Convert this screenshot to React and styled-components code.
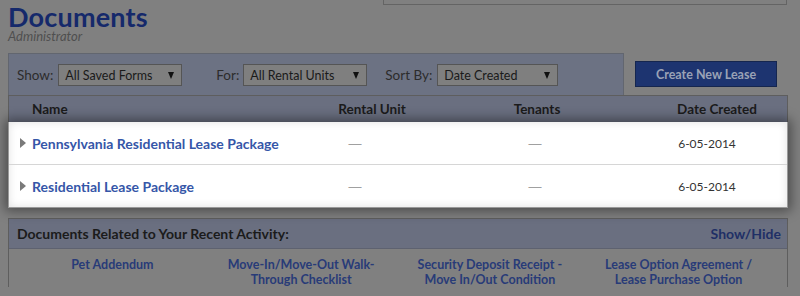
import React from 'react';
import styled, { createGlobalStyle } from 'styled-components';

const Global = createGlobalStyle`
  html, body { margin: 0; padding: 0; background: #808080; }
  body {
    width: 800px; height: 296px; overflow: hidden;
    font-family: Lato, "Open Sans", "Liberation Sans", sans-serif;
  }
  * { box-sizing: border-box; }
`;

const Page = styled.div`
  padding: 0 12px 0 8px;
`;

const TopRow = styled.header`
  height: 53px;
  display: flex;
  justify-content: space-between;
  align-items: flex-start;
`;

const TitleBlock = styled.div`
  padding-top: 2.5px;
`;

const Title = styled.h1`
  margin: 0;
  font-size: 27px;
  line-height: 28px;
  font-weight: 700;
  color: #15296b;
  letter-spacing: 0.2px;
`;

const Subtitle = styled.div`
  margin-top: -1px;
  font-size: 13px;
  line-height: 13px;
  font-style: italic;
  color: #4f4f4f;
`;

const TopBox = styled.div`
  width: 404px;
  height: 5px;
  margin-right: 1px;
  border: 1px solid #646464;
  border-top: none;
`;

const FilterRow = styled.div`
  display: flex;
  align-items: flex-start;
`;

const FilterBar = styled.div`
  width: 616px;
  height: 42px;
  display: flex;
  align-items: center;
  padding: 1px 0 0 8px;
  background: #6c7283;
  border: 1px solid #62666f;
  border-bottom: none;
`;

const FilterGroup = styled.div`
  display: flex;
  align-items: center;
  margin-left: ${p => p.$offset || 0}px;
`;

const Label = styled.span`
  font-size: 13.5px;
  color: #2c2c2c;
  margin-right: ${p => p.$gap}px;
`;

const Select = styled.div`
  width: ${p => p.$w}px;
  height: 22px;
  display: flex;
  align-items: center;
  justify-content: space-between;
  padding: 0 7px 0 6px;
  background: #7f7f7f;
  border: 1px solid #555;
  font-size: 12.5px;
  color: #1a1a1a;
`;

const Arrow = styled.span`
  width: 0;
  height: 0;
  border-left: 3.5px solid transparent;
  border-right: 3.5px solid transparent;
  border-top: 7px solid #111;
`;

const CreateButton = styled.button`
  margin: 8px 0 0 11px;
  width: 142px;
  height: 26px;
  background: #1d3470;
  border: 1px solid #15264f;
  color: #9aa2b6;
  font-family: inherit;
  font-size: 12.5px;
  font-weight: 700;
  padding: 0;
`;

const Table = styled.div`
  border: 1px solid #5e5e5e;
  border-bottom: none;
`;

const HeaderRow = styled.div`
  display: grid;
  grid-template-columns: 292px 142px 188px 1fr;
  height: 26px;
  align-items: center;
  background: #6a6f80;
  font-size: 13.5px;
  font-weight: 700;
  color: #1b1b1b;
`;

const HeadCell = styled.div`
  text-align: ${p => p.$align || 'center'};
  padding-left: ${p => p.$pl || 0}px;
`;

const Highlight = styled.div`
  position: relative;
  z-index: 1;
  margin: 0 -1px;
  background: #fff;
  border: 1px solid #9a9a9a;
  border-top: none;
  box-shadow: 0 0 11px 3px rgba(0, 0, 0, 0.42), inset 0 0 8px rgba(0, 0, 0, 0.12);
`;

const Row = styled.div`
  display: grid;
  grid-template-columns: 293px 106px 254px 90px 1fr;
  height: ${p => p.$h}px;
  align-items: center;
  border-bottom: ${p => (p.$last ? 'none' : '1px solid #d6d6d6')};
  font-size: 13px;
`;

const NameCell = styled.div`
  display: flex;
  align-items: center;
  padding-left: 11px;
`;

const Caret = styled.span`
  width: 0;
  height: 0;
  border-top: 5px solid transparent;
  border-bottom: 5px solid transparent;
  border-left: 6px solid #7a7a7a;
  margin-right: 6px;
`;

const DocLink = styled.a`
  color: #3556a8;
  font-size: 14px;
  font-weight: 700;
  text-decoration: none;
`;

const Cell = styled.div`
  text-align: center;
  font-size: 12px;
  color: #333;
`;

const Dash = styled.div`
  text-align: center;
  font-family: "Liberation Sans", sans-serif;
  font-size: 13px;
  color: #a0a0a0;
`;

const Panel = styled.section`
  margin-top: 10px;
  border: 1px solid #5e5e5e;
  border-bottom: none;
`;

const PanelHeader = styled.div`
  height: 30px;
  display: flex;
  align-items: center;
  justify-content: space-between;
  padding: 0 6px 0 8px;
  background: #6a6f80;
  border-bottom: 1px solid #5e6270;
  font-size: 14px;
  font-weight: 700;
  color: #1b1b1b;
`;

const Toggle = styled.span`
  color: #1f2f66;
`;

const Links = styled.div`
  display: grid;
  grid-template-columns: repeat(4, 1fr);
  padding: 8px 14px 0 9px;
`;

const RelatedLink = styled.a`
  text-align: center;
  font-size: 12.5px;
  line-height: 15px;
  font-weight: 700;
  color: #283b78;
  text-decoration: none;
  padding: 0 20px;
`;

const rows = [
  { name: 'Pennsylvania Residential Lease Package', date: '6-05-2014', h: 43 },
  { name: 'Residential Lease Package', date: '6-05-2014', h: 42 },
];

const related = [
  'Pet Addendum',
  'Move-In/Move-Out Walk-Through Checklist',
  'Security Deposit Receipt - Move In/Out Condition',
  'Lease Option Agreement / Lease Purchase Option',
];

export default function App() {
  return (
    <Page>
      <Global />
      <TopRow>
        <TitleBlock>
          <Title>Documents</Title>
          <Subtitle>Administrator</Subtitle>
        </TitleBlock>
        <TopBox />
      </TopRow>
      <FilterRow>
        <FilterBar>
          <FilterGroup>
            <Label $gap={5}>Show:</Label>
            <Select $w={124}>All Saved Forms<Arrow /></Select>
          </FilterGroup>
          <FilterGroup $offset={34}>
            <Label $gap={4}>For:</Label>
            <Select $w={124}>All Rental Units<Arrow /></Select>
          </FilterGroup>
          <FilterGroup $offset={18}>
            <Label $gap={5}>Sort By:</Label>
            <Select $w={121}>Date Created<Arrow /></Select>
          </FilterGroup>
        </FilterBar>
        <CreateButton>Create New Lease</CreateButton>
      </FilterRow>
      <Table>
        <HeaderRow>
          <HeadCell $align="left" $pl={23}>Name</HeadCell>
          <HeadCell>Rental Unit</HeadCell>
          <HeadCell>Tenants</HeadCell>
          <HeadCell $pl={16}>Date Created</HeadCell>
        </HeaderRow>
        <Highlight>
          {rows.map((r, i) => (
            <Row key={r.name} $h={r.h} $last={i === rows.length - 1}>
              <NameCell>
                <Caret />
                <DocLink href="#">{r.name}</DocLink>
              </NameCell>
              <Dash>—</Dash>
              <Dash>—</Dash>
              <Cell>{r.date}</Cell>
            </Row>
          ))}
        </Highlight>
      </Table>
      <Panel>
        <PanelHeader>
          <span>Documents Related to Your Recent Activity:</span>
          <Toggle>Show/Hide</Toggle>
        </PanelHeader>
        <Links>
          {related.map(t => (
            <RelatedLink key={t} href="#">{t}</RelatedLink>
          ))}
        </Links>
      </Panel>
    </Page>
  );
}
